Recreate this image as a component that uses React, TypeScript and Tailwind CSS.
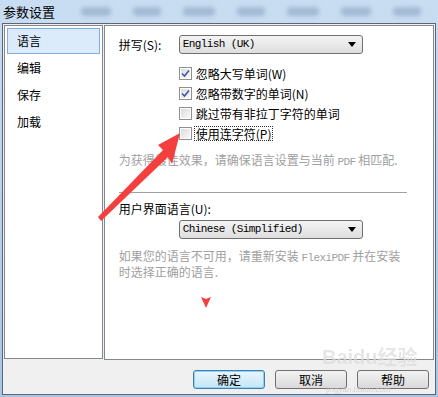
import React from "react";

const cjk = '"Noto Sans CJK SC", "Noto Sans", sans-serif';
const mono = '"Liberation Mono", "DejaVu Sans Mono", monospace';

const navItems = ["语言", "编辑", "保存", "加载"];

const spellOptions: { label: string; checked: boolean; focused?: boolean }[] = [
  { label: "忽略大写单词(W)", checked: true },
  { label: "忽略带数字的单词(N)", checked: true },
  { label: "跳过带有非拉丁字符的单词", checked: false },
  { label: "使用连字符(P)", checked: false, focused: true },
];

function Latin({ children }: { children: React.ReactNode }) {
  return (
    <span className="text-[11px] tracking-[-0.6px]" style={{ fontFamily: mono }}>
      {children}
    </span>
  );
}

function Checkbox({ checked }: { checked: boolean }) {
  return (
    <div className="w-[13px] h-[13px] border border-[#8e8f8f] bg-white p-[1px] shrink-0">
      <div className="w-full h-full bg-gradient-to-br from-[#dcdcdc] to-[#f8f8f8] flex items-center justify-center">
        {checked && (
          <svg width="9" height="9" viewBox="0 0 9 9">
            <path d="M1 4.5 L3.5 7 L8 1.5" fill="none" stroke="#3f58a0" strokeWidth="1.6" />
          </svg>
        )}
      </div>
    </div>
  );
}

function Dropdown({ value }: { value: string }) {
  return (
    <div className="w-[184px] h-[19px] rounded-[3px] border border-[#707070] bg-gradient-to-b from-[#f4f4f4] to-[#dedede] flex items-center pl-[3px] pr-[6px] text-black">
      <span className="text-[11px] tracking-[-0.6px] flex-1" style={{ fontFamily: mono }}>
        {value}
      </span>
      <svg width="8" height="5" viewBox="0 0 8 5">
        <path d="M0 0 H8 L4 5 Z" fill="#000" />
      </svg>
    </div>
  );
}

function DialogButton({ label, primary }: { label: string; primary?: boolean }) {
  return (
    <div
      className={`w-[72px] h-[19px] rounded-[3px] border flex items-center justify-center text-[12px] text-black bg-gradient-to-b ${
        primary
          ? "border-[#3c7fb1] from-[#eaf6fd] to-[#c4e5f6] shadow-[inset_0_0_0_1px_#8fd1f3]"
          : "border-[#707070] from-[#f2f2f2] to-[#dadada]"
      }`}
    >
      {label}
    </div>
  );
}

export default function App() {
  return (
    <div
      className="w-[438px] h-[397px] relative overflow-hidden bg-gradient-to-b from-[#c9ddf2] to-[#a9c5e6] text-black"
      style={{ fontFamily: cjk }}
    >
      {/* title bar */}
      <div className="h-[23px] flex items-center pl-[3px] gap-[26px]">
        <span className="text-[13px] leading-none">参数设置</span>
        <div className="flex gap-[22px] blur-[2px] opacity-40">
          {[30, 28, 32, 28, 32, 30, 28].map((w, i) => (
            <div key={i} className="h-[9px] bg-[#6e88a8] rounded-sm" style={{ width: w }} />
          ))}
        </div>
      </div>

      {/* dialog body */}
      <div className="ml-[2px] w-[434px] h-[372px] border border-[#5d6772] bg-[#f0f0f0] flex flex-col pt-[1px] px-[1px]">
        <div className="flex gap-[1px] h-[335px]">
          {/* left nav */}
          <div className="w-[99px] h-[334px] border border-[#828790] bg-white p-[2px]">
            {navItems.map((item, i) => (
              <div
                key={item}
                className={`h-[26px] flex items-center pl-[9px] text-[12px] mb-[1px] border ${
                  i === 0 ? "border-[#84acdd] bg-[#dcebfc]" : "border-transparent"
                }`}
              >
                {item}
              </div>
            ))}
          </div>

          {/* right content */}
          <div className="w-[331px] h-[335px] border border-[#828790] bg-white pl-[14px] pt-[9px] text-[12px]">
            <div className="flex items-center">
              <span className="w-[60px]">拼写(S):</span>
              <Dropdown value="English (UK)" />
            </div>

            <div className="ml-[60px] mt-[13px] flex flex-col gap-[7px]">
              {spellOptions.map((opt) => (
                <div key={opt.label} className="flex items-center h-[13px] gap-[2px]">
                  <Checkbox checked={opt.checked} />
                  <span
                    className={`leading-[13px] px-[1px] border border-dotted ${
                      opt.focused ? "border-[#333]" : "border-transparent"
                    }`}
                  >
                    {opt.label}
                  </span>
                </div>
              ))}
            </div>

            <div className="mt-[13px] text-[#a0a0a0] leading-[14px]">
              为获得最佳效果，请确保语言设置与当前 <Latin>PDF</Latin> 相匹配.
            </div>

            <div className="mt-[23px] w-[288px] h-[1px] bg-[#a0a0a0]" />

            <div className="mt-[9px] leading-[14px]">用户界面语言(U):</div>
            <div className="mt-[4px] ml-[60px]">
              <Dropdown value="Chinese (Simplified)" />
            </div>

            <div className="mt-[10px] text-[#a0a0a0] leading-[14px]">
              如果您的语言不可用，请重新安装 <Latin>FlexiPDF</Latin> 并在安装
              <br />
              时选择正确的语言.
            </div>
          </div>
        </div>

        {/* buttons */}
        <div className="flex justify-end gap-[10px] pr-[5px] mt-[10px]">
          <DialogButton label="确定" primary />
          <DialogButton label="取消" />
          <DialogButton label="帮助" />
        </div>
      </div>

      {/* watermark */}
      <div
        className="absolute left-[322px] top-[347px] h-[20px] flex items-center text-[20px] font-bold text-[#dcdcdc] opacity-70 leading-[20px]"
        style={{ fontFamily: '"Liberation Sans", sans-serif' }}
      >
        Baidu
        <span className="leading-[20px]" style={{ fontFamily: cjk }}>
          经验
        </span>
      </div>
      <div
        className="absolute left-[326px] top-[386px] text-[8px] text-[#c8c8c8] opacity-70 leading-none"
        style={{ fontFamily: '"Liberation Sans", sans-serif' }}
      >
        jingyan.baidu.com
      </div>

      {/* red annotations */}
      <svg className="absolute left-0 top-0 pointer-events-none" width="438" height="397">
        <polygon
          points="180,133 158,145 163,150 98,217 101,221 168,157 172,164"
          fill="#f43f3f"
        />
        <polygon points="201,297 206,299 211,297 206,308" fill="#f43f3f" />
      </svg>
    </div>
  );
}
